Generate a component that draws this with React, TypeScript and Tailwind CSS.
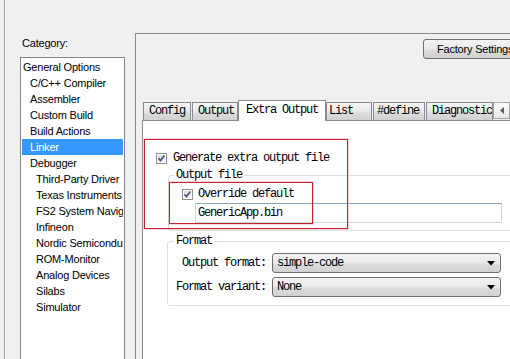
import React from "react";

const MONO = "font-['Liberation_Mono',monospace] text-[12px] tracking-[-1.2px] text-black";
const SANS = "font-['Liberation_Sans',Arial,sans-serif] text-[11px] tracking-[-0.2px] text-black";

function CheckBox() {
  return (
    <svg width="11" height="11" viewBox="0 0 11 11" className="flex-none">
      <defs>
        <linearGradient id="cbg" x1="0" y1="0" x2="1" y2="1">
          <stop offset="0" stopColor="#d6d6d6" />
          <stop offset="1" stopColor="#fafafa" />
        </linearGradient>
      </defs>
      <rect x="0.5" y="0.5" width="10" height="10" fill="#ffffff" stroke="#8e8f8f" />
      <rect x="2" y="2" width="7" height="7" fill="url(#cbg)" />
      <path d="M2.6 5.4 L4.5 7.6 L8.4 2.6" fill="none" stroke="#4a5b8c" strokeWidth="1.7" />
    </svg>
  );
}

function Arrow() {
  return (
    <svg width="8" height="5" viewBox="0 0 8 5" className="flex-none">
      <path d="M0 0 L8 0 L4 4.5 Z" fill="#000" />
    </svg>
  );
}

function Select({ value }: { value: string }) {
  return (
    <div className="w-[229px] h-[20px] flex-none rounded-[3px] border border-[#707070] bg-[linear-gradient(#f3f3f3,#ebebeb_45%,#dddddd_55%,#d0d0d0)] flex items-center pl-[4px] pr-[5px]">
      <div className={`${MONO} flex-1 leading-[18px]`}>{value}</div>
      <Arrow />
    </div>
  );
}

type Row = { label: string; indent: number; selected?: boolean };

const rows: Row[] = [
  { label: "General Options", indent: 1 },
  { label: "C/C++ Compiler", indent: 8 },
  { label: "Assembler", indent: 8 },
  { label: "Custom Build", indent: 8 },
  { label: "Build Actions", indent: 8 },
  { label: "Linker", indent: 8, selected: true },
  { label: "Debugger", indent: 8 },
  { label: "Third-Party Driver", indent: 14 },
  { label: "Texas Instruments", indent: 14 },
  { label: "FS2 System Navigator", indent: 14 },
  { label: "Infineon", indent: 14 },
  { label: "Nordic Semiconductor", indent: 14 },
  { label: "ROM-Monitor", indent: 14 },
  { label: "Analog Devices", indent: 14 },
  { label: "Silabs", indent: 14 },
  { label: "Simulator", indent: 14 },
];

function Tab({ label, w, pl, ml, selected }: { label: string; w: string; pl: string; ml?: string; selected?: boolean }) {
  if (selected) {
    return (
      <div className={`${w} ${pl} ${MONO} leading-[19px] h-[21px] -mb-px relative z-10 flex-none border border-b-0 border-[#898c95] bg-white overflow-hidden whitespace-nowrap`}>
        {label}
      </div>
    );
  }
  return (
    <div className={`${w} ${pl} ${ml ?? ""} ${MONO} leading-[17px] h-[18px] flex-none border border-b-0 border-[#898c95] bg-[linear-gradient(#f6f6f6,#ebebeb_45%,#dcdcdc_60%,#d0d0d0)] overflow-hidden whitespace-nowrap`}>
      {label}
    </div>
  );
}

export default function App() {
  return (
    <div className="w-[510px] h-[359px] overflow-hidden bg-[#f0f0f0] flex">
      {/* Left column */}
      <div className="ml-[4px] w-[131px] flex-none border-l border-[#a7a7a7] pl-[15px] pt-[35px] flex flex-col">
        <div className={`${SANS} h-[16px] leading-[16px] pl-[2px]`}>Category:</div>
        <div className="mt-[6px] w-[105px] h-[320px] flex-none border border-[#828790] bg-white pt-px pl-px">
          {rows.map((r) => (
            <div
              key={r.label}
              className={`${SANS} leading-[16px] h-[16px] w-[101px] overflow-hidden whitespace-nowrap ${r.selected ? "bg-[#3399ff] text-white" : ""}`}
              style={{ paddingLeft: r.indent }}
            >
              {r.label}
            </div>
          ))}
        </div>
      </div>

      {/* Right panel */}
      <div className="w-[400px] flex-none mt-[33px] border-l border-t border-[#8c8c8c] flex flex-col">
        <div className={`${SANS} leading-[18px] mt-[5px] ml-[287px] w-[100px] h-[20px] flex-none rounded-[3px] border border-[#707070] bg-[linear-gradient(#f3f3f3,#ebebeb_45%,#dddddd_55%,#cfcfcf)] pl-[13px] whitespace-nowrap overflow-hidden`}>
          Factory Settings
        </div>

        {/* Tab control */}
        <div className="mt-[41px] ml-[6px] flex flex-col">
          <div className="h-[20px] flex items-end pl-px">
            <Tab label="Config" w="w-[48px]" pl="pl-[5px]" />
            <Tab label="Output" w="w-[46px]" pl="pl-[5px]" ml="ml-px" />
            <Tab label="Extra Output" w="w-[88px]" pl="pl-[7px]" selected />
            <Tab label="List" w="w-[46px]" pl="pl-[2px]" />
            <Tab label="#define" w="w-[52px]" pl="pl-[3px]" ml="ml-px" />
            <Tab label="Diagnostic" w="w-[67px]" pl="pl-[5px]" ml="ml-px" />
            <div className="flex mb-px">
              <div className="w-[17px] h-[17px] border border-[#a5a5a5] bg-[linear-gradient(#fbfbfb,#e8e8e8)] flex items-center justify-center">
                <svg width="4" height="7" viewBox="0 0 4 7">
                  <path d="M4 0 L0 3.5 L4 7 Z" fill="#5a5a5a" />
                </svg>
              </div>
              <div className="w-[17px] h-[17px] border border-[#a5a5a5] bg-[linear-gradient(#fbfbfb,#e8e8e8)]" />
            </div>
          </div>

          {/* Page */}
          <div className="relative w-[380px] h-[260px] border-l border-t border-[#898c95] bg-white flex flex-col">
            {/* annotation rectangles */}
            <div className="absolute left-[1px] top-[18px] w-[204px] h-[90px] border border-[#c4232d] shadow-[0_0_0_1px_rgba(230,140,150,0.35)] z-20 pointer-events-none" />
            <div className="absolute left-[26px] top-[61px] w-[144px] h-[42px] border border-[#c4232d] shadow-[0_0_0_1px_rgba(230,140,150,0.35)] z-20 pointer-events-none" />

            <div className="mt-[30px] h-[14px] pl-[13px] flex items-center">
              <CheckBox />
              <div className={`${MONO} ml-[6px] leading-[14px] whitespace-nowrap`}>Generate extra output file</div>
            </div>

            {/* Output file group */}
            <div className="relative mt-[10px] ml-[25px] w-[350px] h-[56px] flex-none rounded-[3px] border border-[#d5dfe5] flex flex-col">
              <div className={`${MONO} absolute left-[5px] -top-[8px] px-[2px] bg-white leading-[14px] whitespace-nowrap`}>Output file</div>
              <div className="mt-[11px] h-[14px] pl-[13px] flex items-center">
                <CheckBox />
                <div className={`${MONO} ml-[5px] leading-[14px] whitespace-nowrap`}>Override default</div>
              </div>
              <div className={`${MONO} leading-[18px] mt-[2px] ml-[26px] w-[307px] h-[20px] border border-[#c9d5de] border-t-[#8ea6b8] pl-[2px]`}>
                GenericApp.bin
              </div>
            </div>

            {/* Format group */}
            <div className="relative mt-[10px] ml-[24px] w-[350px] h-[65px] flex-none rounded-[3px] border border-[#d5dfe5] flex flex-col">
              <div className={`${MONO} absolute left-[6px] -top-[8px] px-[2px] bg-white leading-[14px] whitespace-nowrap`}>Format</div>
              <div className="mt-[11px] flex items-center">
                <div className={`${MONO} w-[98px] text-right leading-[20px] whitespace-nowrap`}>Output format:</div>
                <div className="ml-[6px]">
                  <Select value="simple-code" />
                </div>
              </div>
              <div className="mt-[4px] flex items-center">
                <div className={`${MONO} w-[98px] text-right leading-[20px] whitespace-nowrap`}>Format variant:</div>
                <div className="ml-[6px]">
                  <Select value="None" />
                </div>
              </div>
            </div>
          </div>
        </div>
      </div>
    </div>
  );
}
